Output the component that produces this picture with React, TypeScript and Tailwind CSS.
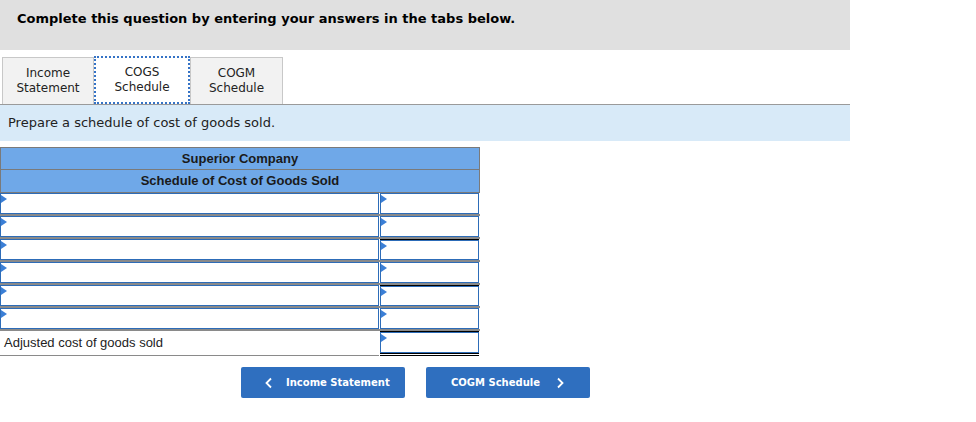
import React from "react";

const verdana = { fontFamily: '"DejaVu Sans", Verdana, sans-serif' };

function Marker() {
  return (
    <span className="absolute left-0 top-[1px] w-0 h-0 border-t-[4px] border-b-[4px] border-l-[6px] border-t-transparent border-b-transparent border-l-[#3b7fd6]" />
  );
}

function InputBox({ className = "" }: { className?: string }) {
  return (
    <div className={`relative h-full border border-[#2d6cb8] bg-white ${className}`}>
      <Marker />
    </div>
  );
}

const rows = [
  { topLine: false },
  { topLine: false },
  { topLine: true },
  { topLine: false },
  { topLine: true },
  { topLine: false },
];

export default function App() {
  return (
    <div className="w-[976px] h-[422px] bg-white" style={verdana}>
      <div className="w-[850px] h-[50px] bg-[#e0e0e0] pl-[17px] pt-[9px]">
        <p className="text-[13px] font-bold text-black">Complete this question by entering your answers in the tabs below.</p>
      </div>

      <div className="w-[850px] pt-[6px] pl-[2px] flex items-end">
        <button className="w-[92px] h-[47px] bg-[#f2f2f2] border border-[#c8c8c8] border-b-0 text-[12px] leading-[15px] text-[#222]">
          Income<br />Statement
        </button>
        <button className="w-[96px] h-[48px] bg-white border-2 border-dotted border-[#3573c6] text-[12px] leading-[15px] text-[#222]">
          COGS<br />Schedule
        </button>
        <button className="w-[93px] h-[47px] bg-[#f2f2f2] border border-[#c8c8c8] border-b-0 text-[12px] leading-[15px] text-[#222]">
          COGM<br />Schedule
        </button>
      </div>

      <div className="w-[850px] h-[37px] bg-[#d8eaf8] border-t border-[#9a9a9a] pl-[8px] flex items-center">
        <p className="text-[13px] text-[#222]">Prepare a schedule of cost of goods sold.</p>
      </div>

      <div className="mt-[6px] w-[480px]" style={{ fontFamily: '"Liberation Sans", Arial, sans-serif' }}>
        <div className="border border-[#7a7a7a] bg-[#6fa8e8]">
          <div className="h-[22px] flex items-center justify-center border-b border-[#7a7a7a] text-[13px] font-bold text-[#1a1a1a]">
            Superior Company
          </div>
          <div className="h-[22px] flex items-center justify-center text-[13px] font-bold text-[#1a1a1a]">
            Schedule of Cost of Goods Sold
          </div>
        </div>
        {rows.map((r, i) => (
          <div key={i} className="h-[23px] flex border-b-2 border-[#8a8a8a]">
            <div className="w-[379px]">
              <InputBox />
            </div>
            <div className={`w-[99px] ml-[1px] ${r.topLine ? "border-t border-black" : ""}`}>
              <InputBox />
            </div>
          </div>
        ))}
        <div className="h-[25px] flex">
          <div className="w-[379px] border-b border-[#8a8a8a] pl-[4px] flex items-center text-[13px] text-[#222]">
            Adjusted cost of goods sold
          </div>
          <div className="w-[99px] ml-[1px] border-t border-black border-b-[3px] border-b-black border-double">
            <InputBox />
          </div>
        </div>
      </div>

      <div className="flex pl-[241px] pt-[11px] gap-[21px]">
        <button className="w-[164px] h-[31px] bg-[#2f6fbf] rounded-[2px] text-white text-[10px] font-bold flex items-center pl-[23px]">
          <svg width="10" height="12" viewBox="0 0 10 12" className="mr-[12px]">
            <path d="M7 1.5 L2.5 6 L7 10.5" fill="none" stroke="white" strokeWidth="1.8" />
          </svg>
          Income Statement
        </button>
        <button className="w-[164px] h-[31px] bg-[#2f6fbf] rounded-[2px] text-white text-[10px] font-bold flex items-center pl-[25px]">
          COGM Schedule
          <svg width="10" height="12" viewBox="0 0 10 12" className="ml-[15px]">
            <path d="M3 1.5 L7.5 6 L3 10.5" fill="none" stroke="white" strokeWidth="1.8" />
          </svg>
        </button>
      </div>
    </div>
  );
}
